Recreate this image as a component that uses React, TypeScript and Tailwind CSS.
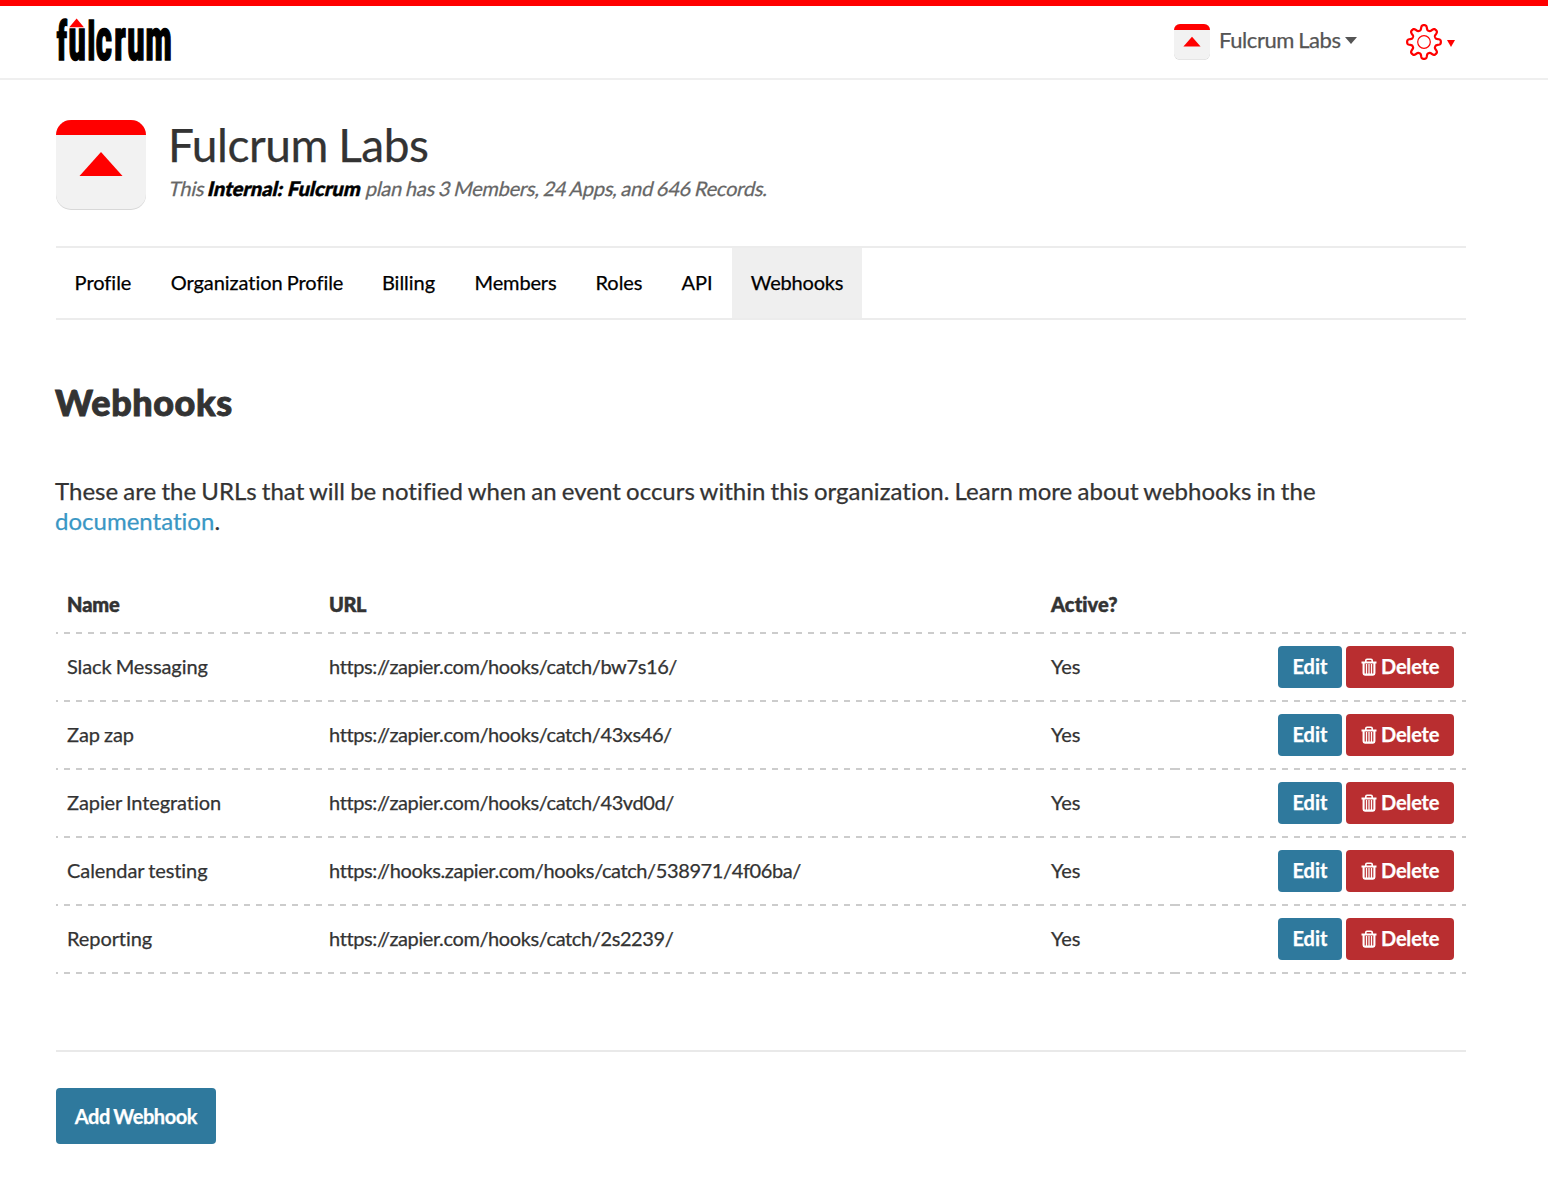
import { useId } from "react";

const NAV: { label: string; className: string }[] = [
  { label: "Profile", className: "w-[95px] pr-px tracking-[-0.02px]" },
  { label: "Organization Profile", className: "w-[212px] tracking-[-0.04px] [word-spacing:-1px]" },
  { label: "Billing", className: "w-[92px] pr-px tracking-[-0.02px]" },
  { label: "Members", className: "w-[121px] tracking-[-0.15px]" },
  { label: "Roles", className: "w-[86px] tracking-[-0.05px]" },
  { label: "API", className: "w-[70px] tracking-[-0.1px]" },
  { label: "Webhooks", className: "w-[130px] bg-[#efefef] tracking-[-0.2px]" },
];

const HOOKS = [
  { name: "Slack Messaging", url: "https://zapier.com/hooks/catch/bw7s16/" },
  { name: "Zap zap", url: "https://zapier.com/hooks/catch/43xs46/" },
  { name: "Zapier Integration", url: "https://zapier.com/hooks/catch/43vd0d/" },
  { name: "Calendar testing", url: "https://hooks.zapier.com/hooks/catch/538971/4f06ba/" },
  { name: "Reporting", url: "https://zapier.com/hooks/catch/2s2239/" },
];

function Logo() {
  return (
    <svg width="130" height="54" viewBox="0 0 130 54" className="block overflow-visible">
      <text
        y="0"
        transform="translate(0.5 42.600) scale(0.67 1.08)"
        fontFamily="'Roboto Condensed', Roboto, sans-serif"
        fontWeight="700"
        fontSize="54"
        fill="#000"
        stroke="#000"
        strokeWidth="1.5"
      >
        <tspan x="0" fontSize="49">f</tspan>
        <tspan x="17.5">u</tspan>
        <tspan x="45.8" fontSize="49">l</tspan>
        <tspan x="58.4 85.8 105.1 132.4">crum</tspan>
      </text>
      <path d="M11.600 11h18l-9-10z" fill="#fff" />
      <path d="M13.300 10.200h14.600L20.600 1.500z" fill="#f00" />
    </svg>
  );
}

function AppBadge({ size }: { size: number }) {
  const id = useId();
  return (
    <svg width={size} height={size} viewBox="0 0 90 90" className="block shrink-0">
      <clipPath id={id}>
        <rect width="90" height="90" rx="15" />
      </clipPath>
      <g clipPath={`url(#${id})`}>
        <rect width="90" height="90" fill="#d8d8d8" />
        <rect width="90" height="89" rx="15" fill="#f2f2f2" />
        <rect width="90" height="15" fill="#f00" />
      </g>
      <path d="M45 32 66.5 56h-43z" fill="#f00" />
    </svg>
  );
}

function gearPath() {
  const pts: string[] = [];
  const steps = 240;
  for (let i = 0; i < steps; i++) {
    const a = (i / steps) * Math.PI * 2 - Math.PI / 2;
    const c = Math.cos(8 * (a + Math.PI / 2));
    const r = 14.5 + 2.5 * Math.tanh(1.8 * c);
    pts.push(`${(18 + r * Math.cos(a)).toFixed(2)} ${(18 + r * Math.sin(a)).toFixed(2)}`);
  }
  return `M${pts.join("L")}Z`;
}

function Gear() {
  return (
    <svg width="36" height="36" viewBox="0 0 36 36" fill="none" stroke="#f00" className="block">
      <path d={gearPath()} strokeWidth="2.2" strokeLinejoin="round" />
      <circle cx="18" cy="18" r="6.3" strokeWidth="1.2" />
    </svg>
  );
}

function Trash() {
  return (
    <svg width="16" height="18" viewBox="0 0 16 18" fill="none" stroke="#fff" className="block">
      <path d="M.5 4.500h15" strokeWidth="2" />
      <path d="M4.800 4V2.500Q4.800 1.300 6 1.300h4Q11.200 1.300 11.200 2.500V4" strokeWidth="1.600" />
      <path d="M2.600 5v10.200Q2.600 16.600 4 16.600h8q1.400 0 1.400-1.400V5" strokeWidth="2.100" />
      <path d="M5.500 6v10M8 6v10M10.500 6v10" strokeWidth="1.300" />
    </svg>
  );
}

const dash =
  "h-[2px] bg-[repeating-linear-gradient(90deg,#ccc_0,#ccc_6px,transparent_6px,transparent_12px)]";

function DashedRule() {
  return (
    <div className="flex h-[2px]">
      <div className="w-[2px] bg-[#ccc]" />
      <div className="w-[6px]" />
      <div className={`${dash} w-[974px]`} />
      <div className="w-[6px] bg-[#ccc]" />
      <div className="w-[6px]" />
      <div className={`${dash} w-[124px]`} />
      <div className={`${dash} flex-1`} />
    </div>
  );
}

const rowGrid = "grid grid-cols-[262px_722px_134px_1fr] items-center pl-[11px] pr-[12px] text-[20px] leading-[24px]";

export default function App() {
  return (
    <div className="min-h-[1190px] w-[1548px] bg-white font-['Lato','Open_Sans',sans-serif] text-[#333] [-webkit-text-stroke:0.25px]">
      <header className="flex h-[80px] items-start justify-between border-t-[6px] border-b-2 border-t-[#f00] border-b-[#efefef] pr-[93px] pl-[56px]">
        <div className="pt-[11px]">
          <Logo />
        </div>
        <div className="flex items-start">
          <div className="flex pt-[18px]">
            <AppBadge size={36} />
            <span className="ml-[9px] w-[126px] text-[22px] leading-[32px] tracking-[-0.42px] whitespace-nowrap text-[#555] [word-spacing:-1px]">
              Fulcrum Labs
            </span>
            <svg width="12" height="7" viewBox="0 0 12 7" className="mt-[13px]">
              <path d="M0 0h12L6 7z" fill="#555" />
            </svg>
          </div>
          <div className="ml-[49px] flex pt-[18px]">
            <Gear />
            <svg width="8" height="7" viewBox="0 0 8 7" className="mt-[16px] ml-[5px]">
              <path d="M0 0h8L4 7z" fill="#f00" />
            </svg>
          </div>
        </div>
      </header>

      <main className="mx-[56px] w-[1410px]">
        <section className="flex h-[130px] pt-[40px]">
          <AppBadge size={90} />
          <div className="ml-[22px]">
            <h1 className="-mt-px text-[46px] leading-[52px] tracking-[-0.45px] [word-spacing:-1px]">Fulcrum Labs</h1>
            <p className="mt-[5px] flex origin-[0_19px] -skew-x-[13deg] text-[20px] leading-[24px] whitespace-pre text-[#666]">
              <span className="w-[39px] tracking-[-0.2px]">This</span>
              <strong className="w-[158px] font-black tracking-[0.050px] text-black [-webkit-text-stroke:0.5px]">
                Internal: Fulcrum
              </strong>
              <span className="tracking-[-0.23px] [word-spacing:-1px]">
                plan has 3 Members, 24 Apps, and 646 Records.
              </span>
            </p>
          </div>
        </section>

        <nav className="mt-[36px] flex h-[74px] border-y-2 border-[#ececec]">
          {NAV.map((n) => (
            <a
              key={n.label}
              className={`flex items-center justify-center pb-[2px] text-[20px] whitespace-nowrap text-black ${n.className}`}
            >
              {n.label}
            </a>
          ))}
        </nav>

        <h2 className="mt-[60px] -ml-px text-[36px] leading-[44px] font-black tracking-[0.55px] [-webkit-text-stroke:0.9px]">
          Webhooks
        </h2>
        <p className="mt-[52px] -ml-px text-[24px] leading-[30px] tracking-[0.01px] whitespace-nowrap [word-spacing:-0.95px]">
          These are the URLs that will be notified when an event occurs within this organization. Learn more about
          webhooks in the
          <br />
          <a className="text-[#3a97c4]">documentation</a>.
        </p>

        <div className="mt-[40px]">
          <div className={`${rowGrid} h-[56px] font-black [-webkit-text-stroke:0.5px]`}>
            <span className="tracking-[-0.1px]">Name</span>
            <span className="tracking-[-0.4px]">URL</span>
            <span className="tracking-[0.1px]">Active?</span>
          </div>
          <DashedRule />
          {HOOKS.map((h) => (
            <div key={h.name}>
              <div className={`${rowGrid} h-[66px]`}>
                <span className="pb-[2px] tracking-[-0.08px] [word-spacing:-1px]">{h.name}</span>
                <span className="pb-[2px] tracking-[-0.39px]">{h.url}</span>
                <span className="pb-[2px] tracking-[-0.1px]">Yes</span>
                <span className="flex justify-end gap-[4px] font-bold text-white">
                  <button className="h-[42px] w-[64px] rounded-[4px] bg-[#2f799d] pb-[2px]">Edit</button>
                  <button className="flex h-[42px] w-[108px] items-center rounded-[4px] bg-[#b92e30] pl-[15px] tracking-[-0.2px]">
                    <Trash />
                    <span className="ml-[4px] pb-[2px]">Delete</span>
                  </button>
                </span>
              </div>
              <DashedRule />
            </div>
          ))}
        </div>

        <hr className="mt-[76px] border-t-2 border-[#e9e9e9]" />
        <button className="mt-[36px] h-[56px] w-[160px] rounded-[4px] bg-[#2f799d] text-[20px] font-bold tracking-[-0.42px] text-white [word-spacing:-1px]">
          Add Webhook
        </button>
      </main>
    </div>
  );
}
